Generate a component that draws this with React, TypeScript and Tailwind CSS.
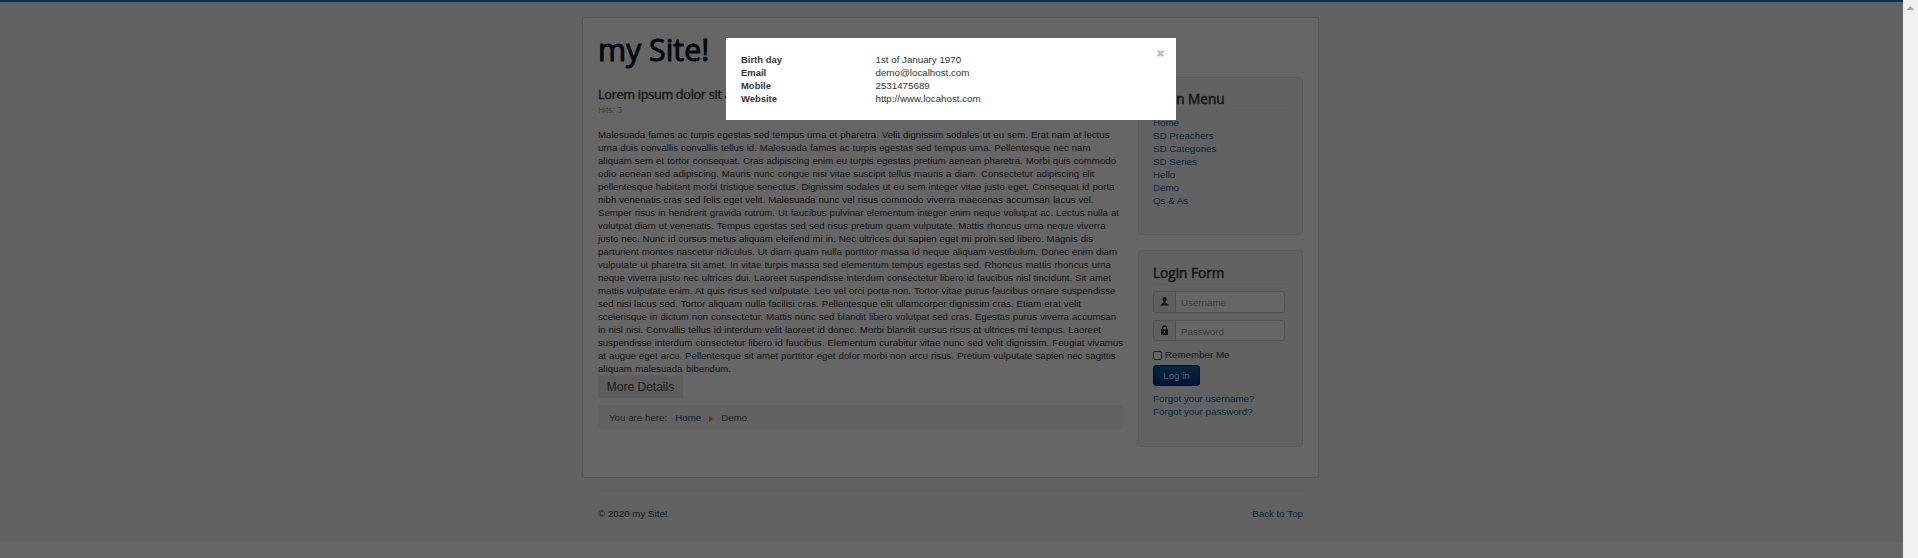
import React from 'react';

const lines: [string, number][] = [
  ['Malesuada fames ac turpis egestas sed tempus urna et pharetra. Velit dignissim sodales ut eu sem. Erat nam at lectus', 511.5],
  ['urna duis convallis convallis tellus id. Malesuada fames ac turpis egestas sed tempus urna. Pellentesque nec nam', 492.5],
  ['aliquam sem et tortor consequat. Cras adipiscing enim eu turpis egestas pretium aenean pharetra. Morbi quis commodo', 518],
  ['odio aenean sed adipiscing. Mauris nunc congue nisi vitae suscipit tellus mauris a diam. Consectetur adipiscing elit', 496.5],
  ['pellentesque habitant morbi tristique senectus. Dignissim sodales ut eu sem integer vitae justo eget. Consequat id porta', 516.5],
  ['nibh venenatis cras sed felis eget velit. Malesuada nunc vel risus commodo viverra maecenas accumsan lacus vel.', 495.5],
  ['Semper risus in hendrerit gravida rutrum. Ut faucibus pulvinar elementum integer enim neque volutpat ac. Lectus nulla at', 521],
  ['volutpat diam ut venenatis. Tempus egestas sed sed risus pretium quam vulputate. Mattis rhoncus urna neque viverra', 507.5],
  ['justo nec. Nunc id cursus metus aliquam eleifend mi in. Nec ultrices dui sapien eget mi proin sed libero. Magnis dis', 495],
  ['parturient montes nascetur ridiculus. Ut diam quam nulla porttitor massa id neque aliquam vestibulum. Donec enim diam', 519],
  ['vulputate ut pharetra sit amet. In vitae turpis massa sed elementum tempus egestas sed. Rhoncus mattis rhoncus urna', 513],
  ['neque viverra justo nec ultrices dui. Laoreet suspendisse interdum consectetur libero id faucibus nisl tincidunt. Sit amet', 513],
  ['mattis vulputate enim. At quis risus sed vulputate. Leo vel orci porta non. Tortor vitae purus faucibus ornare suspendisse', 517.5],
  ['sed nisi lacus sed. Tortor aliquam nulla facilisi cras. Pellentesque elit ullamcorper dignissim cras. Etiam erat velit', 483],
  ['scelerisque in dictum non consectetur. Mattis nunc sed blandit libero volutpat sed cras. Egestas purus viverra accumsan', 518],
  ['in nisl nisi. Convallis tellus id interdum velit laoreet id donec. Morbi blandit cursus risus at ultrices mi tempus. Laoreet', 503],
  ['suspendisse interdum consectetur libero id faucibus. Elementum curabitur vitae nunc sed velit dignissim. Feugiat vivamus', 525],
  ['at augue eget arcu. Pellentesque sit amet porttitor eget dolor morbi non arcu risus. Pretium vulputate sapien nec sagittis', 517.5],
  ['aliquam malesuada bibendum.', 133],
];

const menu = ['Home', 'SD Preachers', 'SD Categories', 'SD Series', 'Hello', 'Demo', 'Qs & As'];

const details = [
  ['Birth day', '1st of January 1970'],
  ['Email', 'demo@localhost.com'],
  ['Mobile', '2531475689'],
  ['Website', 'http://www.locahost.com'],
];

function UserIcon() {
  return (
    <svg width="9" height="9" viewBox="0 0 9 9" fill="#333">
      <path d="M4.500 0C3 0 2.400 1 2.500 2.300c.1 1.200.5 1.900 1.100 2.400v1C3 6.500.4 6.600.1 8.500h8.800C8.600 6.600 6 6.500 5.400 5.700v-1c.6-.5 1-1.200 1.100-2.400C6.600 1 6 0 4.500 0z" />
    </svg>
  );
}

function LockIcon() {
  return (
    <svg width="9" height="10" viewBox="0 0 9 10" fill="#333">
      <path fillRule="evenodd" d="M1 4.300h.8V3a2.700 2.700 0 0 1 5.400 0v1.300H8V10H1zM3.200 4.300h2.600V3a1.300 1.300 0 0 0-2.600 0zM4 6v2h1V6z" />
    </svg>
  );
}

function Field({ icon, text, className }: { icon: React.ReactNode; text: string; className: string }) {
  return (
    <div className={`flex w-[132px] overflow-hidden rounded-[3px] border border-[#ccc] bg-white ${className}`}>
      <span className="flex w-[22px] items-center justify-center border-r border-[#ccc] bg-[#eee] pb-[2px]">{icon}</span>
      <span className="flex items-center pl-[5px] pt-px text-[#999]">{text}</span>
    </div>
  );
}

function PanelTitle({ children }: { children: React.ReactNode }) {
  return (
    <h3 className="mb-[6px] h-[21px] w-[135px] border-b border-[#eee] font-['Open_Sans',sans-serif] text-[13.6px] font-normal leading-[18px] text-[#333] [-webkit-text-stroke:0.5px_#333]">
      {children}
    </h3>
  );
}

export default function App() {
  return (
    <div className="relative flex h-[558px] w-full overflow-hidden bg-white font-['Liberation_Sans',sans-serif] text-[9.75px] leading-[13px] text-[#333]">
      <div className="min-w-0 flex-1">
        <div className="h-[542px] border-t-2 border-[#0088cc] bg-[#f4f6f7] pt-[15px] pr-[2px]">
          <div className="mx-auto h-[461px] w-[737px] rounded-[3px] border border-black/15 bg-white px-[15px] pt-[13px] shadow-[0_0_4px_rgba(0,0,0,0.05)]">
            <h1 className="h-[46px] font-['Open_Sans',sans-serif] text-[30.3px] font-normal leading-[38px] text-[#001a27] [-webkit-text-stroke:1px_#001a27]">my Site!</h1>
            <div className="flex gap-[15px]">
              <main className="w-[525px] shrink-0 pt-[8px]">
                <h2 className="h-[19px] font-['Open_Sans',sans-serif] text-[12.7px] font-normal leading-[18px] tracking-[-0.3px] text-[#333] [-webkit-text-stroke:0.4px_#333]">Lorem ipsum dolor sit amet</h2>
                <p className="mb-[11px] text-[8.45px] text-[#999]">Hits: 3</p>
                <div>
                  {lines.map(([line, width]) => (
                    <p key={line} className="text-justify text-[9.66px] whitespace-nowrap [text-align-last:justify]" style={{ width }}>{line}</p>
                  ))}
                </div>
                <button className="block h-[23px] w-[85px] bg-[#ebebeb] text-center text-[12px] leading-[22px] text-[#444]">More Details</button>
                <nav className="mt-[7px] flex h-[25px] items-center rounded-[3px] bg-[#f5f5f5] pl-[11px] text-[#555]">
                  <span className="mr-[8px]">You are here:</span>
                  <a className="mr-[8px] text-[#006a9f]">Home</a>
                  <svg className="mr-[8px] mt-[3px]" width="4" height="6" viewBox="0 0 4 6" fill="#f08000">
                    <path d="M0 0L4 3L0 6z" />
                  </svg>
                  <span>Demo</span>
                </nav>
              </main>
              <aside className="w-[165px] shrink-0">
                <section className="h-[158px] rounded-[3px] border border-[#e3e3e3] bg-[#f5f5f5] px-[14px] pt-[12px]">
                  <PanelTitle>Main Menu</PanelTitle>
                  <ul className="-mt-[1px] text-[#006a9f]">
                    {menu.map((m) => (
                      <li key={m}>{m}</li>
                    ))}
                  </ul>
                </section>
                <section className="mt-[15px] h-[197px] rounded-[3px] border border-[#e3e3e3] bg-[#f5f5f5] px-[14px] pt-[13px]">
                  <PanelTitle>Login Form</PanelTitle>
                  <Field icon={<UserIcon />} text="Username" className="h-[22px]" />
                  <Field icon={<LockIcon />} text="Password" className="mt-[7px] h-[21px]" />
                  <div className="mt-[6px] flex h-[18px] items-start gap-[3px]">
                    <span className="mt-[4px] h-[9px] w-[9px] rounded-[2px] border border-[#555] bg-white" />
                    <span className="pt-[1px]">Remember Me</span>
                  </div>
                  <button className="block h-[21px] w-[47px] rounded-[3px] border border-[#001f60] bg-gradient-to-b from-[#00639a] to-[#002f8d] text-center leading-[20px] text-[#ddd]">Log in</button>
                  <div className="mt-[6px] text-[#006a9f]">
                    <p>Forgot your username?</p>
                    <p>Forgot your password?</p>
                  </div>
                </section>
              </aside>
            </div>
          </div>
          <footer className="mx-auto mt-[14px] flex w-[705px] justify-between border-t border-[#eee] pt-[14px] shadow-[inset_0_1px_0_#fff]">
            <p>© 2020 my Site!</p>
            <a className="text-[#006a9f]">Back to Top</a>
          </footer>
        </div>
      </div>
      <div className="flex w-[15px] shrink-0 justify-center bg-[#f0f0f0] pt-[6px]">
        <svg width="7" height="4" viewBox="0 0 7 4" fill="#a3a3a3">
          <path d="M3.500 0L7 3.500V4H0V3.500z" />
        </svg>
      </div>
      <div className="absolute inset-y-0 left-0 right-[15px] bg-black/60" />
      <div className="absolute left-[726px] top-[38px] flex h-[82px] w-[450px] bg-white pl-[15px] pr-[12px] pt-[15px]">
        <dl className="flex-1">
          {details.map(([k, v]) => (
            <div key={k} className="flex">
              <dt className="w-[134.5px] text-[9.45px] font-bold">{k}</dt>
              <dd>{v}</dd>
            </div>
          ))}
        </dl>
        <svg className="-mt-[3px]" width="7" height="7" viewBox="0 0 7 7" stroke="#bbb" strokeWidth="2.300">
          <path d="M.8.8L6.200 6.200M6.200.8L.8 6.200" />
        </svg>
      </div>
    </div>
  );
}
